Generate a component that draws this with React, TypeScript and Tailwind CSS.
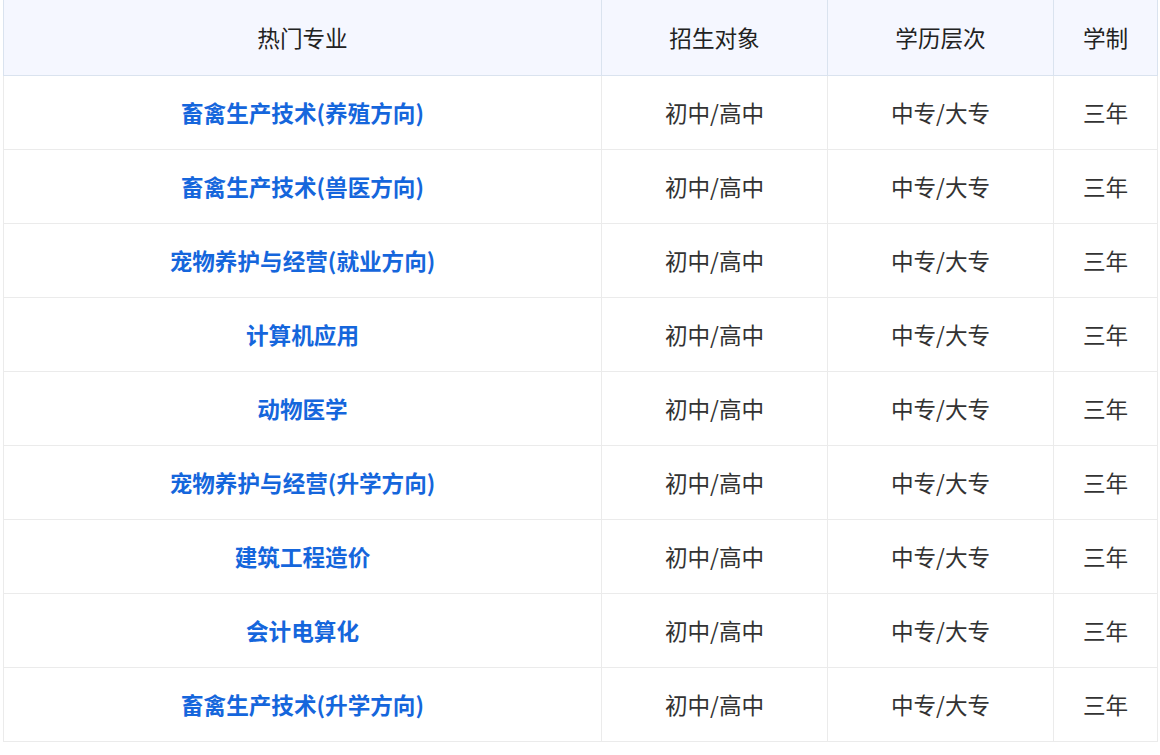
const majors = [
  '畜禽生产技术(养殖方向)',
  '畜禽生产技术(兽医方向)',
  '宠物养护与经营(就业方向)',
  '计算机应用',
  '动物医学',
  '宠物养护与经营(升学方向)',
  '建筑工程造价',
  '会计电算化',
  '畜禽生产技术(升学方向)',
];

export default function App() {
  return (
    <div
      className="w-[1160px] h-[755px] bg-white overflow-hidden"
      style={{ fontFamily: '"Microsoft YaHei", "Noto Sans CJK SC", "Noto Sans", sans-serif' }}
    >
      <table className="ml-[3px] w-[1154px] border-collapse table-fixed text-[22.6px] leading-[1.2]">
        <colgroup>
          <col className="w-[598px]" />
          <col className="w-[226px]" />
          <col className="w-[226px]" />
          <col className="w-[104px]" />
        </colgroup>
        <thead>
          <tr className="h-[75px] bg-[#f5f7ff] text-[#222]">
            <th className="border border-[#dae3ef] border-t-0 font-normal">热门专业</th>
            <th className="border border-[#dae3ef] border-t-0 font-normal">招生对象</th>
            <th className="border border-[#dae3ef] border-t-0 font-normal">学历层次</th>
            <th className="border border-[#dae3ef] border-t-0 font-normal">学制</th>
          </tr>
        </thead>
        <tbody>
          {majors.map((m, i) => (
            <tr key={i} className="h-[74px] text-center text-[#333]">
              <td className="border border-[#ebebeb] font-bold text-[#1566dc] pt-[2px]">{m}</td>
              <td className="border border-[#ebebeb] pt-[2px]">初中/高中</td>
              <td className="border border-[#ebebeb] pt-[2px]">中专/大专</td>
              <td className="border border-[#ebebeb] pt-[2px]">三年</td>
            </tr>
          ))}
        </tbody>
      </table>
    </div>
  );
}
